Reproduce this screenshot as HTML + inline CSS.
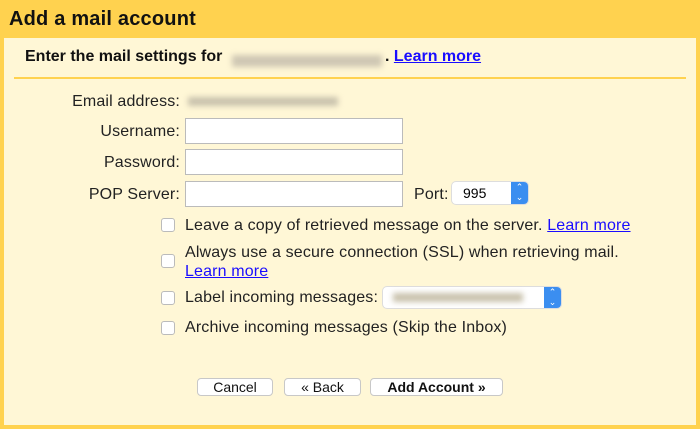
<!DOCTYPE html>
<html><head><style>
body{margin:0;width:700px;height:429px;background:#ffd24f;font-family:"Liberation Sans",sans-serif;position:relative;overflow:hidden}
.a{position:absolute;white-space:nowrap}
.panel{position:absolute;left:4px;top:38px;width:692px;height:387px;background:#fff7d6}
.lbl{font-size:16px;color:#222;letter-spacing:0.15px}
.in{position:absolute;background:#fff;border:1px solid #bbb;box-sizing:border-box}
.cb{position:absolute;width:14px;height:14px;border:1px solid #bbb;border-radius:3px;background:#fff;box-sizing:border-box}
a{color:#1a0dff;text-decoration:underline}
.blur{background:#c9c2ad;filter:blur(3px);position:absolute;height:9px}
.btn{position:absolute;top:378px;height:18px;border:1px solid #c8c8c8;border-radius:4px;background:#fff;font-size:14px;text-align:center;line-height:17px;box-sizing:border-box;color:#111}
.sel{position:absolute;background:#fff;border-radius:4px;box-shadow:0 0 0 1px #ddd}
.arr{position:absolute;right:0;top:0;bottom:0;width:17px;background:#3b8ef0;border-radius:0 4px 4px 0;color:#fff;font-size:9px;text-align:center;line-height:10px}
</style></head><body>
<div class="a" style="left:9px;top:8px;font-size:20px;font-weight:bold;color:#111;letter-spacing:0.2px">Add a mail account</div>
<div class="panel"></div>
<div class="a" style="left:25px;top:48px;font-size:16px;font-weight:bold;color:#111">Enter the mail settings for</div>
<div class="blur" style="left:232px;top:55px;width:150px;height:12px;background:#cfc7b3"></div>
<div class="a" style="left:385px;top:48px;font-size:16px;font-weight:bold;color:#111">. <a href="#">Learn more</a></div>
<div class="a" style="left:14px;top:77px;width:672px;height:2px;background:#ffd24f"></div>
<div class="a lbl" style="right:520px;top:93px">Email address:</div>
<div class="blur" style="left:188px;top:97px;width:150px"></div>
<div class="a lbl" style="right:520px;top:123px">Username:</div>
<div class="in" style="left:185px;top:118px;width:218px;height:26px"></div>
<div class="a lbl" style="right:520px;top:154px">Password:</div>
<div class="in" style="left:185px;top:149px;width:218px;height:26px"></div>
<div class="a lbl" style="right:520px;top:186px">POP Server:</div>
<div class="in" style="left:185px;top:181px;width:218px;height:26px"></div>
<div class="a lbl" style="left:414px;top:186px">Port:</div>
<div class="sel" style="left:452px;top:182px;width:76px;height:22px"><span class="a" style="left:11px;top:3px;font-size:14px">995</span><div class="arr">⌃<br>⌄</div></div>
<div class="cb" style="left:161px;top:218px"></div>
<div class="a lbl" style="left:185px;top:217px">Leave a copy of retrieved message on the server. <a href="#">Learn more</a></div>
<div class="cb" style="left:161px;top:254px"></div>
<div class="a lbl" style="left:185px;top:244px">Always use a secure connection (SSL) when retrieving mail.</div>
<div class="a lbl" style="left:185px;top:263px"><a href="#">Learn more</a></div>
<div class="cb" style="left:161px;top:291px"></div>
<div class="a lbl" style="left:185px;top:289px">Label incoming messages:</div>
<div class="sel" style="left:383px;top:287px;width:178px;height:21px"><div class="blur" style="left:10px;top:6px;width:130px"></div><div class="arr">⌃<br>⌄</div></div>
<div class="cb" style="left:161px;top:321px"></div>
<div class="a lbl" style="left:185px;top:319px">Archive incoming messages (Skip the Inbox)</div>
<div class="btn" style="left:197px;width:76px">Cancel</div>
<div class="btn" style="left:284px;width:77px">« Back</div>
<div class="btn" style="left:370px;width:133px;font-weight:bold">Add Account »</div>
</body></html>
